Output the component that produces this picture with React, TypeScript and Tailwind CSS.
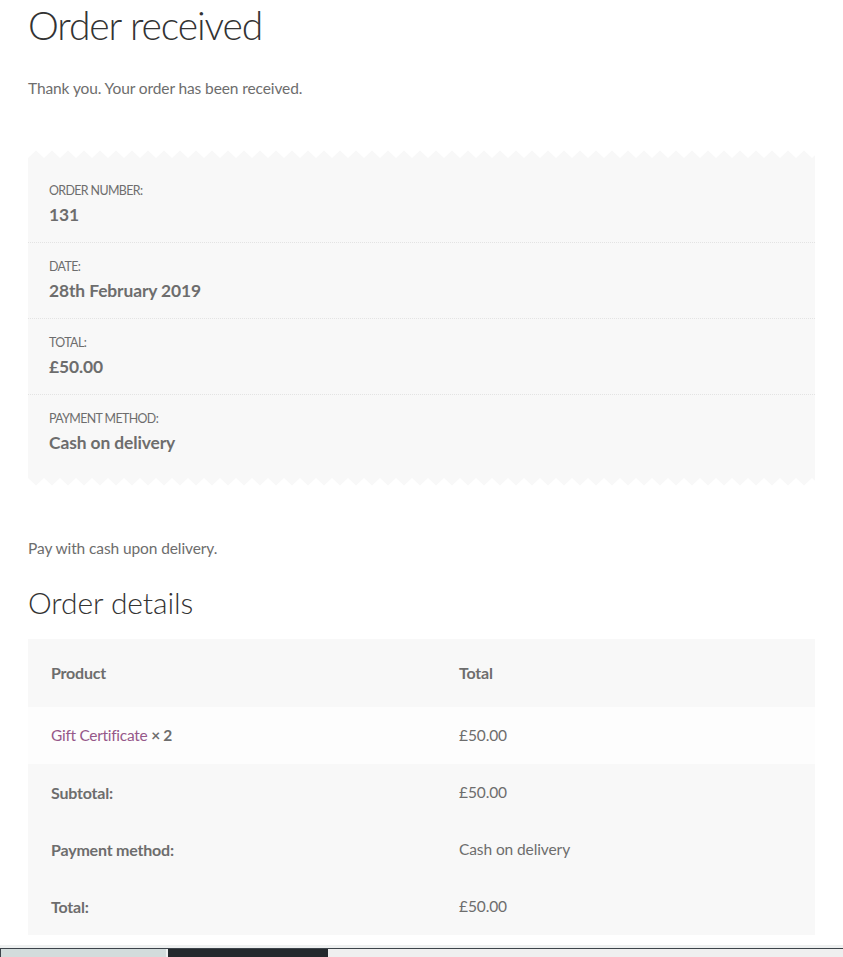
import React from "react";

function Zigzag({ down = false }: { down?: boolean }) {
  return (
    <svg className="block w-full h-[8px]" preserveAspectRatio="none">
      <defs>
        <pattern id={down ? "zzd" : "zzu"} x="0" y="0" width="16" height="8" patternUnits="userSpaceOnUse">
          {down ? (
            <polygon points="0,0 16,0 8,7.5" fill="#f8f8f8" />
          ) : (
            <polygon points="0,8 8,0.5 16,8" fill="#f8f8f8" />
          )}
        </pattern>
      </defs>
      <rect x="0" y="0" width="100%" height="8" fill={down ? "url(#zzd)" : "url(#zzu)"} />
    </svg>
  );
}

function OverviewRow({ label, value, last = false }: { label: string; value: string; last?: boolean }) {
  return (
    <li className={`px-[21px] py-[13px] ${last ? "" : "border-b border-dotted border-[#e3e3e3]"}`}>
      <div className="text-[12.4px] leading-[21px] uppercase tracking-[-0.6px] text-[#6d6d6d]">{label}</div>
      <div className="text-[17.4px] leading-[28px] font-bold text-[#6d6d6d]">{value}</div>
    </li>
  );
}

export default function App() {
  const font = { fontFamily: "Lato, 'Open Sans', sans-serif" };
  return (
    <div className="bg-white min-h-[957px] text-[15.5px] tracking-[-0.1px] text-[#6d6d6d]" style={font}>
      <div className="px-[28px]">
        <h1 className="text-[39px] leading-[51px] font-light text-[#333333] tracking-[-1.1px]">Order received</h1>
        <p className="mt-[24px] leading-[26px]">Thank you. Your order has been received.</p>

        <div className="mt-[49px]">
          <Zigzag />
          <ul className="bg-[#f8f8f8] pt-[9px] pb-[8px]">
            <OverviewRow label="Order number:" value="131" />
            <OverviewRow label="Date:" value="28th February 2019" />
            <OverviewRow label="Total:" value="£50.00" />
            <OverviewRow label="Payment method:" value="Cash on delivery" last />
          </ul>
          <Zigzag down />
        </div>

        <p className="mt-[49px] leading-[26px]">Pay with cash upon delivery.</p>

        <h2 className="mt-[22px] text-[30px] leading-[39px] font-light text-[#333333] tracking-[-0.1px]">Order details</h2>

        <table className="mt-[17px] w-full border-collapse">
          <thead>
            <tr className="bg-[#f8f8f8]">
              <th className="w-[408px] h-[68px] px-[23px] text-left font-bold text-[16px] tracking-[-0.2px]">Product</th>
              <th className="h-[68px] px-[23px] text-left font-bold text-[16px] tracking-[-0.2px]">Total</th>
            </tr>
          </thead>
          <tbody>
            <tr className="bg-[#fdfdfd]">
              <td className="h-[57px] px-[23px]">
                <span className="text-[#96588a] tracking-[-0.3px]">Gift Certificate</span>{" "}
                <strong className="font-bold tracking-[-0.4px]">× 2</strong>
              </td>
              <td className="h-[57px] px-[23px]">£50.00</td>
            </tr>
          </tbody>
          <tfoot>
            <tr className="bg-[#f8f8f8]">
              <th className="h-[57px] px-[23px] text-left font-bold text-[16px] tracking-[-0.2px]">Subtotal:</th>
              <td className="h-[57px] px-[23px]">£50.00</td>
            </tr>
            <tr className="bg-[#f8f8f8]">
              <th className="h-[57px] px-[23px] text-left font-bold text-[16px] tracking-[-0.2px]">Payment method:</th>
              <td className="h-[57px] px-[23px]">Cash on delivery</td>
            </tr>
            <tr className="bg-[#f8f8f8]">
              <th className="h-[57px] px-[23px] text-left font-bold text-[16px] tracking-[-0.2px]">Total:</th>
              <td className="h-[57px] px-[23px]">£50.00</td>
            </tr>
          </tfoot>
        </table>
      </div>

      <div className="mt-[10px] h-[3px] bg-[#eef0f0]" />
      <div className="h-px bg-[#3c434a]" />
      <div className="flex h-[12px]">
        <div className="w-[166px] bg-[#d3dcdc] border-l border-[#3c434a]" />
        <div className="w-[2px] bg-[#eef0f0]" />
        <div className="w-[160px] bg-[#24292d]" />
        <div className="flex-1 bg-[#efefef]" />
      </div>
    </div>
  );
}
